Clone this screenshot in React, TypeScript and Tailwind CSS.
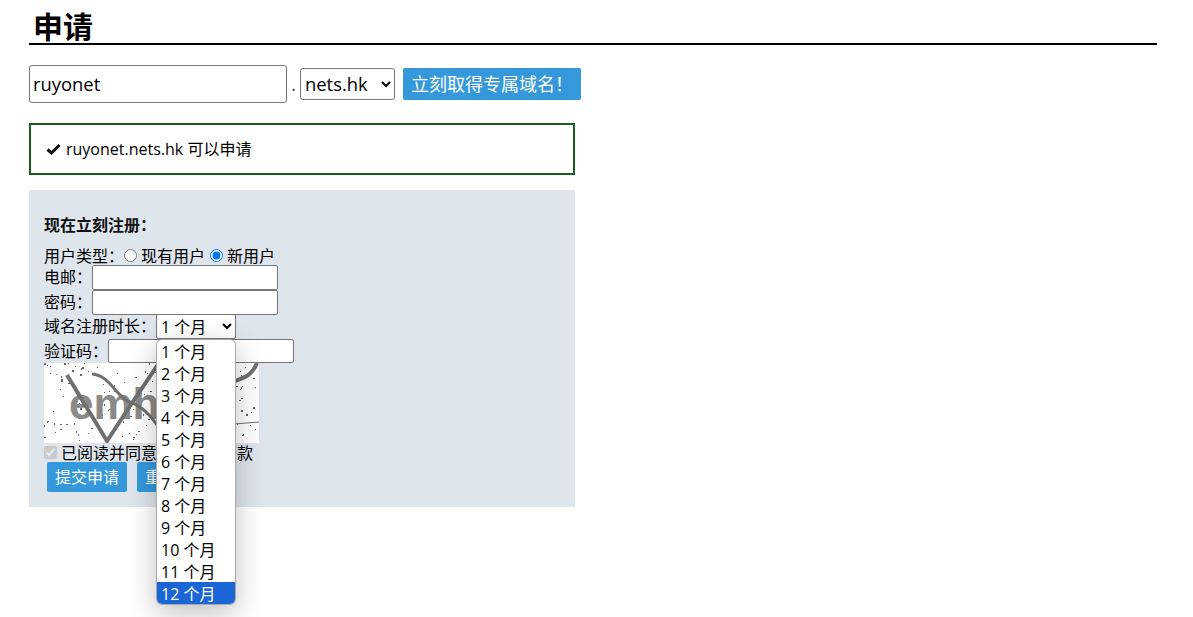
const FONT = "font-['Open_Sans','Noto_Sans_CJK_SC',sans-serif]";

const months = ['1 个月', '2 个月', '3 个月', '4 个月', '5 个月', '6 个月', '7 个月', '8 个月', '9 个月', '10 个月', '11 个月', '12 个月'];

// fixed speckle so the captcha looks the same on every render
const dots = Array.from({ length: 170 }, (_, i) => {
  const a = Math.sin(i * 12.9898) * 43758.5453;
  const b = Math.sin(i * 78.233) * 12543.1234;
  return [Math.floor((a - Math.floor(a)) * 213), Math.floor((b - Math.floor(b)) * 78)];
});

const Captcha = () => (
  <svg width="215" height="80" viewBox="0 0 215 80" className="block bg-white">
    <g fill="#666">
      {dots.map(([x, y], i) => (
        <rect key={i} x={x} y={y} width={i % 3 === 0 ? 2 : 1} height={i % 4 === 0 ? 2 : 1} />
      ))}
    </g>
    <text x="25" y="56" fontSize="44" fontWeight="700" fill="#8a8a8a" fontFamily="Liberation Sans, sans-serif">emh</text>
    <g fill="none" stroke="#6f6f6f" strokeWidth="4">
      <path d="M23 12 L63 78 L88 40 L115 0" />
      <path d="M48 11 C66 12 72 34 86 39 C100 44 108 55 113 62" strokeWidth="3" />
      <path d="M213 0 C208 12 202 14 191 18" />
      <path d="M190 61 L215 59" strokeWidth="1" />
    </g>
  </svg>
);

const Check = () => (
  <svg width="15" height="12" viewBox="0 0 15 12" className="shrink-0">
    <path d="M1.5 6.5 L5.5 10 L13.5 2" fill="none" stroke="#111" strokeWidth="3" />
  </svg>
);

export default function App() {
  return (
    <div className={`${FONT} w-[1193px] h-[617px] overflow-hidden bg-white text-black pl-[29px] pr-[36px]`}>
      <h1 className="h-[45px] border-b-2 border-black pl-[4px] text-[30px] leading-[54px] font-bold">申请</h1>

      <div className="mt-[20px] flex items-center h-[38px]">
        <input
          defaultValue="ruyonet"
          className="w-[258px] h-[38px] rounded-[3px] border border-[#767676] px-[3px] pb-[2px] text-[18.4px] outline-none"
        />
        <span className="w-[13px] text-center text-[18px] text-[#444]">.</span>
        <select className="w-[95px] h-[32px] pb-[2px] rounded-[3px] border border-[#767676] bg-white text-[18.4px]">
          <option>nets.hk</option>
        </select>
        <button className="ml-[8px] w-[178px] h-[32px] rounded-[2px] bg-[#3498db] text-white text-[18px] leading-[32px]">立刻取得专属域名！</button>
      </div>

      <div className="mt-[20px] w-[546px] h-[52px] border-2 border-[#1b5e20] flex items-center gap-[5px] pl-[15px] text-[16px]">
        <Check />
        <span>ruyonet.nets.hk 可以申请</span>
      </div>

      <div className="relative mt-[15px] w-[546px] h-[317px] bg-[#dfe5ec] pl-[15px] text-[16px] leading-[20px]">
        <div className="pt-[25px] h-[56px] font-bold text-[#111]">现在立刻注册：</div>

        <div className="h-[19px] flex items-center">
          <span>用户类型：</span>
          <input type="radio" name="usertype" className="mr-[4px] w-[13px] h-[13px]" />
          <span>现有用户</span>
          <input type="radio" name="usertype" defaultChecked className="ml-[5px] mr-[4px] w-[13px] h-[13px]" />
          <span>新用户</span>
        </div>

        <div className="h-[25px] flex items-center">
          <span className="w-[48px] pb-[2px]">电邮：</span>
          <input className="w-[186px] h-[25px] rounded-[2px] border border-[#767676] bg-white" />
        </div>
        <div className="h-[25px] flex items-center">
          <span className="w-[48px] pb-[2px]">密码：</span>
          <input type="password" className="w-[186px] h-[25px] rounded-[2px] border border-[#767676] bg-white" />
        </div>
        <div className="h-[24px] flex items-center">
          <span className="w-[112px] pb-[2px]">域名注册时长：</span>
          <select className="w-[80px] h-[25px] -mt-[1px] rounded-[2px] border border-[#767676] bg-white text-[16px]">
            <option>1 个月</option>
          </select>
        </div>
        <div className="h-[24px] flex items-center">
          <span className="w-[64px]">验证码：</span>
          <input className="w-[186px] h-[24px] rounded-[2px] border border-[#767676] bg-white" />
        </div>

        <Captcha />

        <div className="h-[20px] flex items-center">
          <input type="checkbox" defaultChecked disabled className="mr-[4px] mb-[2px] w-[13px] h-[13px]" />
          <span>已阅读并同意网站服务条款</span>
        </div>

        <div className="-mt-[1px] ml-[3px] flex gap-[10px]">
          <button className="w-[80px] h-[30px] rounded-[2px] bg-[#3498db] text-white">提交申请</button>
          <button className="w-[80px] h-[30px] rounded-[2px] bg-[#3498db] text-white">重新填写</button>
        </div>

        {/* open select list */}
        <ul className="absolute left-[127px] top-[149px] w-[80px] h-[266px] rounded-[6px] overflow-hidden bg-white border border-[#a8a8a8] shadow-[0_8px_28px_rgba(0,0,0,0.25)] text-[16px] leading-[24px]">
          {months.map((m, i) => (
            <li key={m} className={i === 11 ? 'h-[22px] pl-[4px] bg-[#1a66d6] text-white' : 'h-[22px] pl-[4px]'}>{m}</li>
          ))}
        </ul>
      </div>
    </div>
  );
}
